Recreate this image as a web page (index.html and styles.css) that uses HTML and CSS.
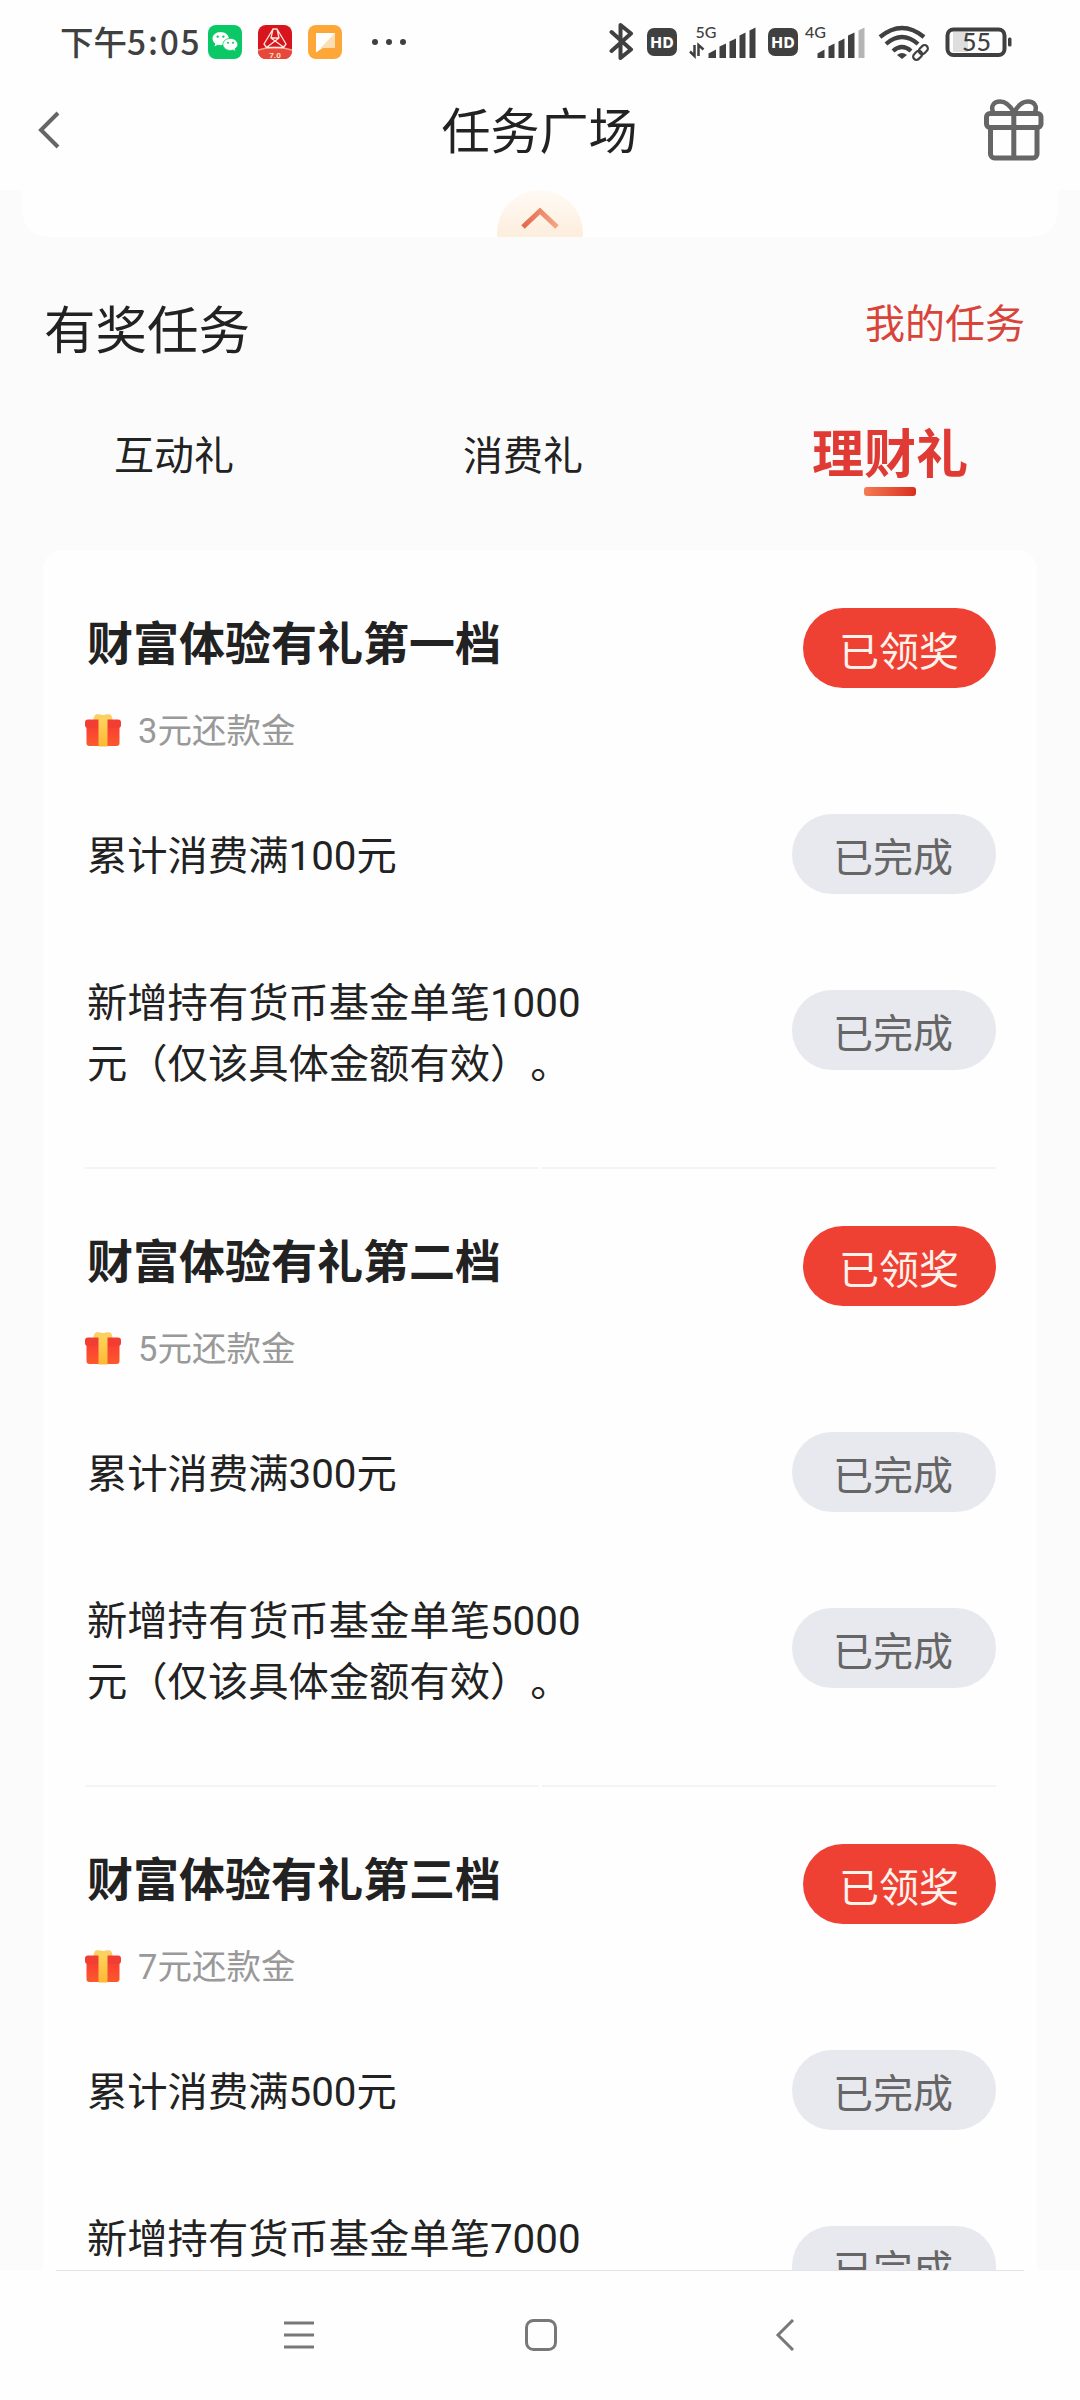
FILE: index.html
```html
<!DOCTYPE html>
<html lang="zh-CN">
<head>
<meta charset="utf-8">
<title>任务广场</title>
<link rel="stylesheet" href="styles.css">
</head>
<body>
<svg class="defs" width="0" height="0" aria-hidden="true">
  <defs>
    <linearGradient id="boxRed" x1="0" y1="0" x2="0" y2="1"><stop offset="0" stop-color="#ef3f35"/><stop offset=".35" stop-color="#fb4430"/><stop offset="1" stop-color="#fb5a2c"/></linearGradient>
    <linearGradient id="ribbon" x1="0" y1="0" x2="0" y2="1"><stop offset="0" stop-color="#fcd45c"/><stop offset="1" stop-color="#fcb834"/></linearGradient>
    <symbol id="gift" viewBox="0 0 36 34">
      <path d="M8.500 8c0-5 2-7.500 4.500-6.500 2-.6 3 .6 5 .6s3-1.200 5-.6c2.500-1 4.500 1.500 4.500 6.500z" fill="#fbd063"/>
      <rect x="1.500" y="10" width="33" height="23" rx="3" fill="url(#boxRed)"/>
      <rect x="0" y="6.500" width="36" height="8.500" rx="3" fill="#f23d33"/>
      <rect x="13.500" y="5" width="9" height="28.500" fill="url(#ribbon)"/>
    </symbol>
  </defs>
</svg>
<div class="screen">
  <header class="status">
    <span class="clock">下午<span class="digits">5:05</span></span>
    <svg class="app" width="34" height="34" viewBox="0 0 34 34"><rect width="34" height="34" rx="8" fill="#0bc866"/><path d="M12.500 7C7.800 7 4.500 10 4.500 13.600c0 2 1.100 3.800 2.700 5L6.500 21.500l3.200-1.700c.9.300 1.800.4 2.800.4 4.700 0 8.300-2.900 8.300-6.600S17.200 7 12.500 7z" fill="#fff"/><path d="M22.400 13.400c-4.200 0-7.500 2.700-7.500 6s3.300 6 7.500 6c.9 0 1.700-.1 2.500-.4l2.700 1.500-.6-2.600c1.700-1.100 2.800-2.700 2.800-4.500 0-3.300-3.300-6-7.400-6z" fill="#fff" stroke="#0bc866" stroke-width=".8"/><g fill="#0bc866"><circle cx="9.700" cy="11.600" r="1.200"/><circle cx="15.400" cy="11.600" r="1.200"/><circle cx="20" cy="17.700" r="1"/><circle cx="25" cy="17.700" r="1"/></g></svg>
    <svg class="app" width="34" height="34" viewBox="0 0 34 34"><rect width="34" height="34" rx="8" fill="#d8151d"/><path d="M0 25q17-4 34 0v1a8 8 0 0 1-8 8H8a8 8 0 0 1-8-8z" fill="#e8483c"/><path d="M0 25q17-5 34 0" fill="none" stroke="#f7a58e" stroke-width="1.500"/><path d="M15 4h4l9 15-2.500 3.500h-17L6 19zM15 4l-2 9 13 9.500M19 4l2 9L8.500 22.500M13 13h8" fill="none" stroke="#ffe9dd" stroke-width="1.300" stroke-linejoin="round"/><text x="17" y="32.500" class="badge">7.0</text></svg>
    <svg class="app" width="34" height="34" viewBox="0 0 34 34"><rect width="34" height="34" rx="8" fill="#fda738"/><path d="M8 8h19v15H14.500L8 27.500z" fill="#fff"/><path d="M27 8v15H12.500z" fill="#fddfb3"/></svg>
    <svg class="dots" width="36" height="8" viewBox="0 0 36 8" fill="#404040"><circle cx="4" cy="4" r="3"/><circle cx="18" cy="4" r="3"/><circle cx="32" cy="4" r="3"/></svg>
    <svg class="signals" width="408" height="44" viewBox="0 0 408 44" fill="#404040">
      <path d="M2.500 12 22 29.500 11.500 38V5L22 13.500 2.500 31" fill="none" stroke="#404040" stroke-width="4" stroke-linejoin="round" stroke-linecap="round"/>
      <rect x="38" y="8" width="30" height="28" rx="7"/><text x="53" y="27.500" class="hd" textLength="23">HD</text>
      <text x="86.500" y="17.500" class="net">5G</text>
      <path d="M85.500 25v11L81 31.500M89.500 36V25l5 4.500" fill="none" stroke="#404040" stroke-width="2.500"/>
      <path d="M99.500 38v-4.500l7.500-4V38zM110.500 38V26.500l6.500-3V38zM120.500 38V21.500l6.500-3V38zM130.500 38V15.500l6-3V38zM140.500 38V10.500l6-3V38z"/>
      <rect x="159" y="8" width="30" height="28" rx="7"/><text x="174" y="27.500" class="hd" textLength="23">HD</text>
      <text x="196" y="17.500" class="net">4G</text>
      <path d="M208.500 38v-4.500l7-4V38zM219.500 38V26.500l6-3V38zM229.500 38V21.500l6-3V38zM239 38V15.500l6.500-3V38z"/><path d="M249.500 38V10.500l6-3V38z" fill="#b5b5b5"/>
      <g fill="none" stroke="#404040" stroke-width="4.300"><path d="M271 17q22-18 44 0M277 24q16-14 32 0M284 31q9-8 18 0"/></g><path d="M288 35q5-4 10 0l-5 4z"/>
      <g fill="none" stroke="#404040" stroke-width="2.200"><rect x="-5.500" y="-3.300" width="10" height="6.600" rx="3.300" transform="translate(309 35) rotate(-45)"/><rect x="-4.500" y="-3.300" width="10" height="6.600" rx="3.300" transform="translate(314 30) rotate(-45)"/></g>
      <rect x="344" y="12" width="15" height="20" fill="#dedede"/><rect x="338.500" y="9.500" width="57" height="25.500" rx="6" fill="none" stroke="#404040" stroke-width="4"/><rect x="399" y="17.500" width="3.500" height="9" rx="1.500"/><text x="367.500" y="30.500" class="level">55</text>
    </svg>
  </header>

  <nav class="topbar">
    <svg width="22" height="40" viewBox="0 0 22 40" fill="none" stroke="#666" stroke-width="4"><path d="M20 3 3 20 20 37"/></svg>
    <h1>任务广场</h1>
    <svg width="60" height="62" viewBox="0 0 60 62" fill="none" stroke="#666" stroke-width="5"><rect x="2.500" y="14.500" width="54.500" height="14" rx="3.500"/><path d="M6.500 29v26a4 4 0 0 0 4 4h38.500a4 4 0 0 0 4-4V29M29.800 14v45"/><path d="M9.500 14C6 7 10 2.500 16 2.500S27 8 30 13.500C33 8 38 2.500 44 2.500S54 7 50.500 14" stroke-width="4.500"/></svg>
  </nav>

  <main>
    <div class="panel"><div class="collapse"><svg width="38" height="21" viewBox="0 0 38 21"><defs><linearGradient id="arrow"><stop offset="0" stop-color="#e4694a"/><stop offset="1" stop-color="#f5a583"/></linearGradient></defs><path d="M2 19 19 3l17 16" fill="none" stroke="url(#arrow)" stroke-width="5"/></svg></div></div>
    <div class="heading"><h2>有奖任务</h2><a>我的任务</a></div>
    <div class="tabs"><span>互动礼</span><span>消费礼</span><span class="active">理财礼</span></div>

    <div class="card">
      <section>
        <div class="head"><h3>财富体验有礼第一档</h3><b class="btn claimed">已领奖</b></div>
        <div class="reward"><svg width="36" height="34"><use href="#gift"/></svg><span>3元还款金</span></div>
        <div class="task"><p>累计消费满100元</p><b class="btn">已完成</b></div>
        <div class="task long"><p>新增持有货币基金单笔1000<br>元（仅该具体金额有效）。</p><b class="btn">已完成</b></div>
        <div class="rule"><i></i><i></i></div>
      </section>
      <section>
        <div class="head"><h3>财富体验有礼第二档</h3><b class="btn claimed">已领奖</b></div>
        <div class="reward"><svg width="36" height="34"><use href="#gift"/></svg><span>5元还款金</span></div>
        <div class="task"><p>累计消费满300元</p><b class="btn">已完成</b></div>
        <div class="task long"><p>新增持有货币基金单笔5000<br>元（仅该具体金额有效）。</p><b class="btn">已完成</b></div>
        <div class="rule"><i></i><i></i></div>
      </section>
      <section>
        <div class="head"><h3>财富体验有礼第三档</h3><b class="btn claimed">已领奖</b></div>
        <div class="reward"><svg width="36" height="34"><use href="#gift"/></svg><span>7元还款金</span></div>
        <div class="task"><p>累计消费满500元</p><b class="btn">已完成</b></div>
        <div class="task long"><p>新增持有货币基金单笔7000</p><b class="btn">已完成</b></div>
      </section>
    </div>
  </main>

  <footer>
    <div class="edge"></div>
    <div class="keys">
      <svg width="32" height="32" viewBox="0 0 32 32" stroke="#787878" stroke-width="3"><path d="M1 4h30M1 16h30M1 28h30"/></svg>
      <svg width="32" height="32" viewBox="0 0 32 32" fill="none" stroke="#787878" stroke-width="3"><rect x="1.500" y="1.500" width="29" height="29" rx="7"/></svg>
      <svg width="32" height="32" viewBox="0 0 32 32" fill="none" stroke="#787878" stroke-width="3"><path d="M27 1 12 16l15 15"/></svg>
    </div>
  </footer>
</div>
</body>
</html>
```
FILE: styles.css
```css
* { box-sizing: border-box; margin: 0; padding: 0; }
body { background: #fff; font-family: Roboto, "Noto Sans CJK SC", sans-serif; color: #222; text-spacing-trim: space-all; }
svg { display: block; flex: none; }
.defs { position: absolute; }
.screen { width: 1080px; height: 2400px; display: flex; flex-direction: column; overflow: hidden; background: #fefefe; }

.status { height: 84px; flex: none; display: flex; align-items: center; padding-left: 60px; }
.clock { width: 148px; padding-bottom: 2px; font: 500 33.500px/82px "Noto Sans CJK SC", sans-serif; color: #404040; white-space: nowrap; }
.digits { letter-spacing: 1.800px; }
.app { margin-right: 16px; }
.dots { margin-left: 13px; }
.signals { margin-left: 202px; }
.hd { font: 800 15px Inter, sans-serif; fill: #fff; text-anchor: middle; }
.net { font: 500 16px Lato, sans-serif; }
.level { font: 500 25px Lato, sans-serif; text-anchor: middle; }
.badge { font: 700 8px Roboto, sans-serif; fill: #ffe3c0; text-anchor: middle; }

.topbar { height: 106px; flex: none; display: flex; align-items: center; justify-content: space-between; padding: 0 36px 14px 38px; }
.topbar h1 { font-size: 49px; font-weight: 400; line-height: 60px; padding: 6px 0 0 35px; }

main { height: 2080px; flex: none; overflow: hidden; background: #fbfbfb; }
.panel { height: 47px; margin: 0 22px; background: #fefefe; border-radius: 0 0 26px 26px; display: flex; justify-content: center; }
.collapse { width: 86px; height: 47px; border-radius: 43px 43px 0 0; background: linear-gradient(#fffaf5, #fdeedd); display: flex; justify-content: center; padding-top: 18px; }
.heading { height: 181px; display: flex; justify-content: space-between; padding: 62px 55px 0 44px; }
.heading h2 { font-size: 51.500px; font-weight: 400; line-height: 66px; }
.heading a { font-size: 40px; line-height: 52px; color: #d9443a; }
.tabs { height: 132px; display: grid; grid-template-columns: repeat(3, 349px); padding-left: 114px; line-height: 78px; font-size: 40px; }
.tabs .active { width: 156px; font-size: 52px; font-weight: 700; line-height: 76px; color: #e03a34; }
.tabs .active::after { content: ""; display: block; width: 52px; height: 9px; margin: -7px auto 0; border-radius: 3px; background: linear-gradient(90deg, #f47c54, #d92f20); }

.card { margin: 0 43px; background: #fefefe; border-radius: 20px; }
section { height: 618px; padding: 58px 41px 0 44px; }
.head { height: 80px; display: flex; justify-content: space-between; }
.head h3 { font-size: 46px; font-weight: 700; line-height: 72px; }
.btn { flex: none; width: 204px; height: 80px; border-radius: 40px; padding: 5px 2px 0 0; background: #e8e9ee; color: #666; font-size: 40px; font-weight: 400; line-height: 80px; text-align: center; }
.btn.claimed { width: 193px; padding-right: 1px; background: #ef4034; color: #fff3ec; }
.reward { height: 84px; margin: 0 0 42px -2px; display: flex; align-items: center; color: #999; font-size: 34.500px; }
.reward span { padding: 0 0 4px 17px; }
.task { display: flex; align-items: flex-start; justify-content: space-between; font-size: 40.300px; }
.task p { line-height: 61px; padding-top: 12px; white-space: nowrap; }
.task.long { margin-top: 96px; }
.task.long p { height: 122px; margin: -17px 0 -25px; padding: 0; }
.rule { display: flex; gap: 3px; margin: 0 0 0 -2px; padding-top: 97px; }
.rule i { flex: 1; height: 2px; background: #f4f4f4; }

footer { height: 130px; flex: none; background: #fefefe; }
.edge { height: 1px; margin: 0 56px; background: #e4e4e8; }
.keys { display: flex; justify-content: space-between; padding: 48px 282px 0 283px; }
```
